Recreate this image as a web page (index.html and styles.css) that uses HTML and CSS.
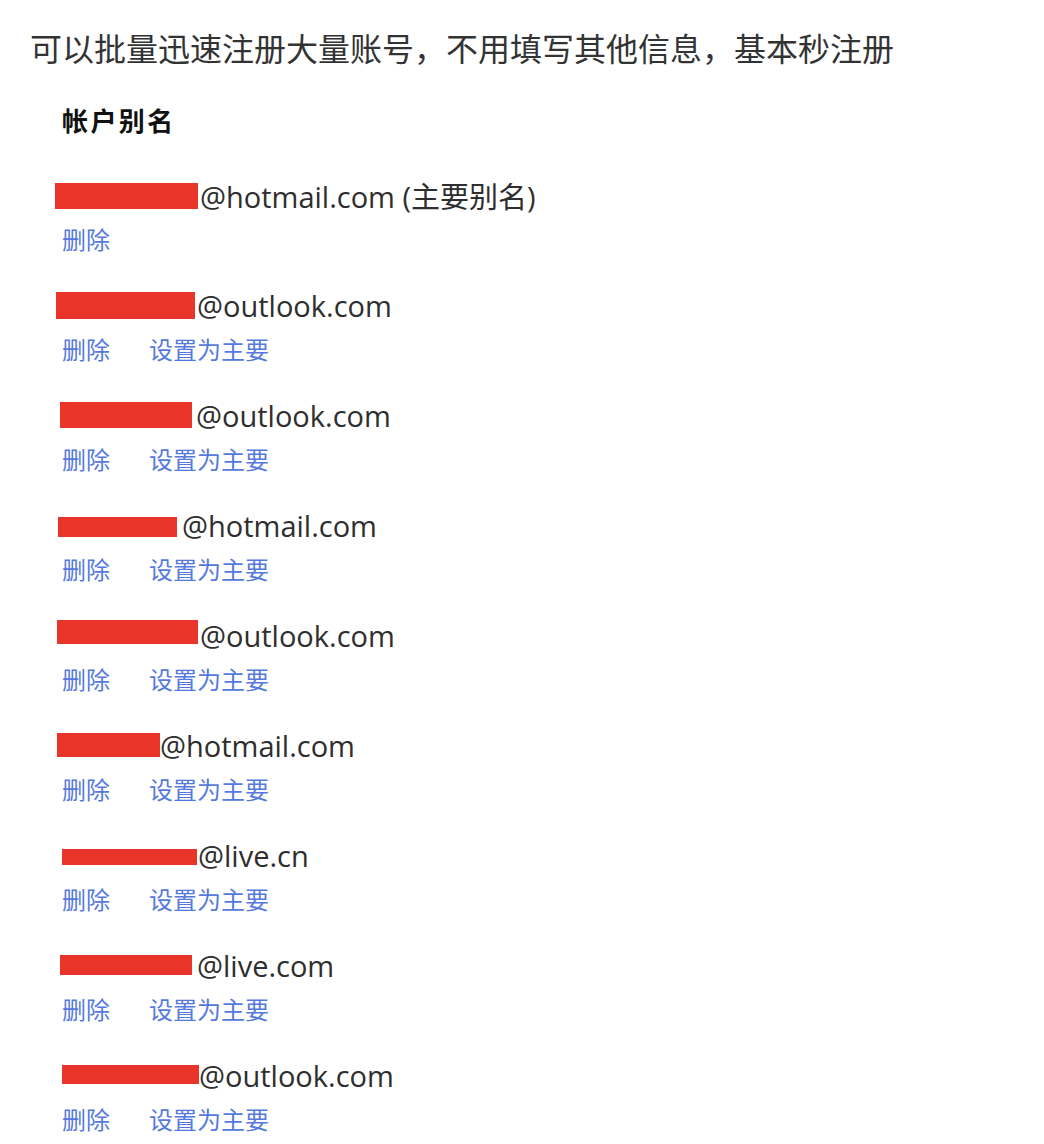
FILE: index.html
```html
<!DOCTYPE html>
<html lang="zh">
<head>
<meta charset="utf-8">
<link rel="stylesheet" href="styles.css">
</head>
<body>
<p class="title">可以批量迅速注册大量账号，不用填写其他信息，基本秒注册</p>
<section class="panel">
  <h2 class="heading">帐户别名</h2>
  <div class="alias">
    <div class="email"><span class="mask m1"></span><span>@hotmail.com (主要别名)</span></div>
    <div class="links"><a>删除</a></div>
  </div>
  <div class="alias">
    <div class="email"><span class="mask m2"></span><span>@outlook.com</span></div>
    <div class="links"><a>删除</a><a>设置为主要</a></div>
  </div>
  <div class="alias">
    <div class="email"><span class="mask m3"></span><span>@outlook.com</span></div>
    <div class="links"><a>删除</a><a>设置为主要</a></div>
  </div>
  <div class="alias">
    <div class="email"><span class="mask m4"></span><span>@hotmail.com</span></div>
    <div class="links"><a>删除</a><a>设置为主要</a></div>
  </div>
  <div class="alias">
    <div class="email"><span class="mask m5"></span><span>@outlook.com</span></div>
    <div class="links"><a>删除</a><a>设置为主要</a></div>
  </div>
  <div class="alias">
    <div class="email"><span class="mask m6"></span><span>@hotmail.com</span></div>
    <div class="links"><a>删除</a><a>设置为主要</a></div>
  </div>
  <div class="alias">
    <div class="email"><span class="mask m7"></span><span>@live.cn</span></div>
    <div class="links"><a>删除</a><a>设置为主要</a></div>
  </div>
  <div class="alias">
    <div class="email"><span class="mask m8"></span><span>@live.com</span></div>
    <div class="links"><a>删除</a><a>设置为主要</a></div>
  </div>
  <div class="alias">
    <div class="email"><span class="mask m9"></span><span>@outlook.com</span></div>
    <div class="links"><a>删除</a><a>设置为主要</a></div>
  </div>
</section>
</body>
</html>
```
FILE: styles.css
```css
html, body {
  margin: 0;
  padding: 0;
  background: #ffffff;
}
body {
  width: 1044px;
  height: 1144px;
  overflow: hidden;
}
.title {
  margin: 0;
  padding: 23px 0 0 30px;
  font-family: "Noto Sans CJK SC", sans-serif;
  font-size: 32px;
  line-height: 48px;
  color: #333333;
  white-space: nowrap;
}
.panel {
  padding-left: 62px;
}
.heading {
  margin: 31px 0 0 0;
  font-family: "Noto Sans CJK SC", sans-serif;
  font-size: 26px;
  font-weight: 700;
  letter-spacing: 2.4px;
  line-height: 36px;
  color: #111111;
}
.alias {
  margin-top: 37px;
}
.alias + .alias {
  margin-top: 24px;
}
.email {
  display: flex;
  align-items: center;
  height: 40px;
  font-family: "Open Sans", "Noto Sans CJK SC", sans-serif;
  font-size: 29px;
  color: #2e2e2e;
  white-space: nowrap;
}
.mask {
  display: block;
  background: #e9342a;
  flex: none;
}
.m1 { width: 143px; height: 26px; margin-left: -7px; margin-right: 2px; margin-top: 2px; }
.m2 { width: 139px; height: 27px; margin-left: -6px; margin-right: 2px; margin-top: 0; }
.m3 { width: 132px; height: 26px; margin-left: -2px; margin-right: 4px; margin-top: 0; }
.m4 { width: 119px; height: 20px; margin-left: -4px; margin-right: 5px; margin-top: 4px; }
.m5 { width: 141px; height: 24px; margin-left: -5px; margin-right: 2px; margin-top: -6px; }
.m6 { width: 103px; height: 24px; margin-left: -5px; margin-right: 0; margin-top: 0; }
.m7 { width: 135px; height: 16px; margin-left: 0; margin-right: 1px; margin-top: 4px; }
.m8 { width: 132px; height: 20px; margin-left: -2px; margin-right: 5px; margin-top: 0; }
.m9 { width: 137px; height: 19px; margin-left: 0; margin-right: 0; margin-top: -2px; }
.links {
  display: flex;
  gap: 39px;
  height: 46px;
  align-items: center;
  font-family: "Noto Sans CJK SC", sans-serif;
  font-size: 24px;
  color: #5579dc;
}
.links a {
  cursor: pointer;
}
```
